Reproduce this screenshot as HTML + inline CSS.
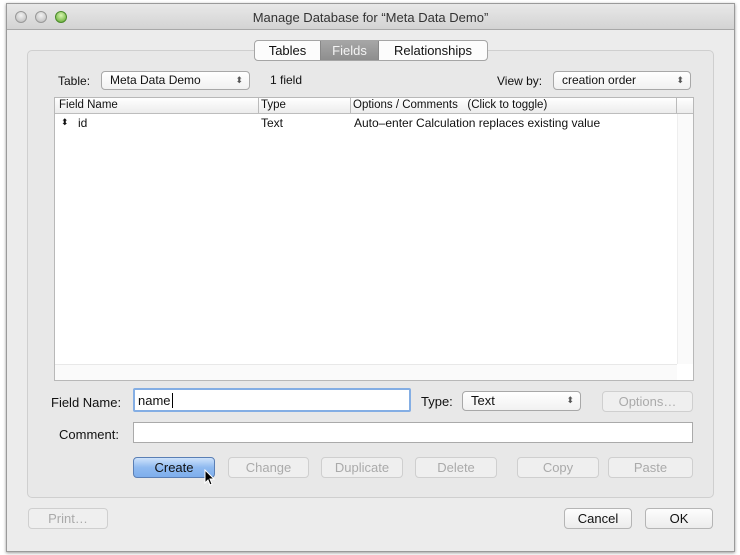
<!DOCTYPE html>
<html><head><meta charset="utf-8"><style>
*{box-sizing:border-box;margin:0;padding:0}
body{width:740px;height:555px;background:#fff;font-family:"Liberation Sans",sans-serif;font-size:12px;color:#111;position:relative;overflow:hidden}
.a{position:absolute}
.win{left:6px;top:3px;width:729px;height:549px;border:1px solid #9a9a9a;background:#ececec;box-shadow:0 1px 3px rgba(0,0,0,.4)}
.title{left:0;top:0;width:727px;height:26px;background:linear-gradient(#e8e8e8,#d3d3d3);border-bottom:1px solid #a8a8a8;text-align:center;line-height:27px;font-size:13px;color:#333}
.dot{width:12px;height:12px;border-radius:50%;top:7px;background:radial-gradient(circle at 50% 35%,#f2f2f2,#b8b8b8);border:1px solid #999}
.grp{left:20px;top:46px;width:687px;height:448px;border:1px solid #cfcfcf;border-radius:5px;background:#e8e8e8}
.btn{height:21px;border:1px solid #b5b5b5;border-radius:4px;background:linear-gradient(#fdfdfd,#ececec);text-align:center;line-height:19px;font-size:13px;color:#111}
.dis{color:#aaa;border-color:#cfcfcf;background:#efefef}
.pop{height:19px;border:1px solid #a8a8a8;border-radius:4px;background:linear-gradient(#fff,#f1f1f1);padding-left:8px;line-height:17px}
.pop:after{content:"⬍";position:absolute;right:6px;top:0;font-size:9px;color:#555}
.lbl{font-size:12px}
</style></head><body>
<div class="a win">
 <div class="a title">Manage Database for “Meta Data Demo”</div>
 <div class="a dot" style="left:8px"></div>
 <div class="a dot" style="left:28px"></div>
 <div class="a dot" style="left:48px;background:radial-gradient(circle at 50% 35%,#d8f5b0,#5aa62a);border-color:#4a8a2a"></div>
 <div class="a grp"></div>
 <div class="a" style="left:247px;top:36px;width:234px;height:21px;border:1px solid #a5a5a5;border-radius:4px;background:#fcfcfc;overflow:hidden;font-size:13px">
  <div class="a" style="left:0;top:0;width:65px;height:19px;text-align:center;line-height:19px">Tables</div>
  <div class="a" style="left:65px;top:0;width:59px;height:19px;background:linear-gradient(#a6a6a6,#8e8e8e);color:#f4f4f4;text-align:center;line-height:19px;border-left:1px solid #888;border-right:1px solid #888">Fields</div>
  <div class="a" style="left:124px;top:0;width:108px;height:19px;text-align:center;line-height:19px">Relationships</div>
 </div>
 <div class="a lbl" style="left:51px;top:70px">Table:</div>
 <div class="a pop" style="left:94px;top:67px;width:149px">Meta Data Demo</div>
 <div class="a lbl" style="left:263px;top:69px">1 field</div>
 <div class="a lbl" style="left:490px;top:70px">View by:</div>
 <div class="a pop" style="left:546px;top:67px;width:138px">creation order</div>
 <div class="a" style="left:47px;top:93px;width:640px;height:284px;background:#fff;border:1px solid #b8b8b8">
  <div class="a" style="left:0;top:0;width:638px;height:16px;background:linear-gradient(#fff,#ececec);border-bottom:1px solid #bdbdbd;font-size:11.5px;line-height:15px">
   <span class="a" style="left:4px">Field Name</span>
   <span class="a" style="left:203px;border-left:1px solid #bbb;padding-left:2px">Type</span>
   <span class="a" style="left:295px;border-left:1px solid #bbb;padding-left:2px">Options / Comments &nbsp;&nbsp;(Click to toggle)</span>
   <span class="a" style="left:621px;top:0;height:15px;border-left:1px solid #bbb"></span>
  </div>
  <div class="a" style="left:622px;top:16px;width:16px;height:250px;background:#fafafa;border-left:1px solid #eee"></div>
  <div class="a" style="left:0;top:266px;width:622px;height:16px;background:#fafafa;border-top:1px solid #e8e8e8"></div>
  <div class="a" style="left:6px;top:19px;font-size:9px">⬍</div>
  <div class="a" style="left:23px;top:18px">id</div>
  <div class="a" style="left:206px;top:18px">Text</div>
  <div class="a" style="left:299px;top:18px">Auto–enter Calculation replaces existing value</div>
 </div>
 <div class="a" style="left:44px;top:391px;font-size:13px">Field Name:</div>
 <div class="a" style="left:126px;top:384px;width:278px;height:24px;border:2px solid #84aee4;border-radius:2px;background:#fff;font-size:13px;padding:3px 3px;line-height:15px">name<span style="border-left:1px solid #000;margin-left:1px"></span></div>
 <div class="a" style="left:414px;top:390px;font-size:13px">Type:</div>
 <div class="a pop" style="left:455px;top:387px;width:119px;height:20px;font-size:13px">Text</div>
 <div class="a btn dis" style="left:595px;top:387px;width:91px">Options…</div>
 <div class="a" style="left:52px;top:423px;font-size:13px">Comment:</div>
 <div class="a" style="left:126px;top:418px;width:560px;height:21px;border:1px solid #aaa;background:#fff"></div>
 <div class="a btn" style="left:126px;top:453px;width:82px;background:linear-gradient(#cfe3fb,#8fbaf0 50%,#7eaeec);border-color:#5a7fb5">Create</div>
 <div class="a btn dis" style="left:221px;top:453px;width:81px">Change</div>
 <div class="a btn dis" style="left:314px;top:453px;width:82px">Duplicate</div>
 <div class="a btn dis" style="left:408px;top:453px;width:82px">Delete</div>
 <div class="a btn dis" style="left:510px;top:453px;width:82px">Copy</div>
 <div class="a btn dis" style="left:601px;top:453px;width:85px">Paste</div>
 <svg class="a" style="left:197px;top:465px" width="12" height="18" viewBox="0 0 12 18"><path d="M1 1 L1 14 L4 11 L6 16 L8 15 L6 10 L10 10 Z" fill="#000" stroke="#fff" stroke-width="1"/></svg>
 <div class="a btn dis" style="left:21px;top:504px;width:80px">Print…</div>
 <div class="a btn" style="left:557px;top:504px;width:68px">Cancel</div>
 <div class="a btn" style="left:638px;top:504px;width:68px">OK</div>
</div>
</body></html>
